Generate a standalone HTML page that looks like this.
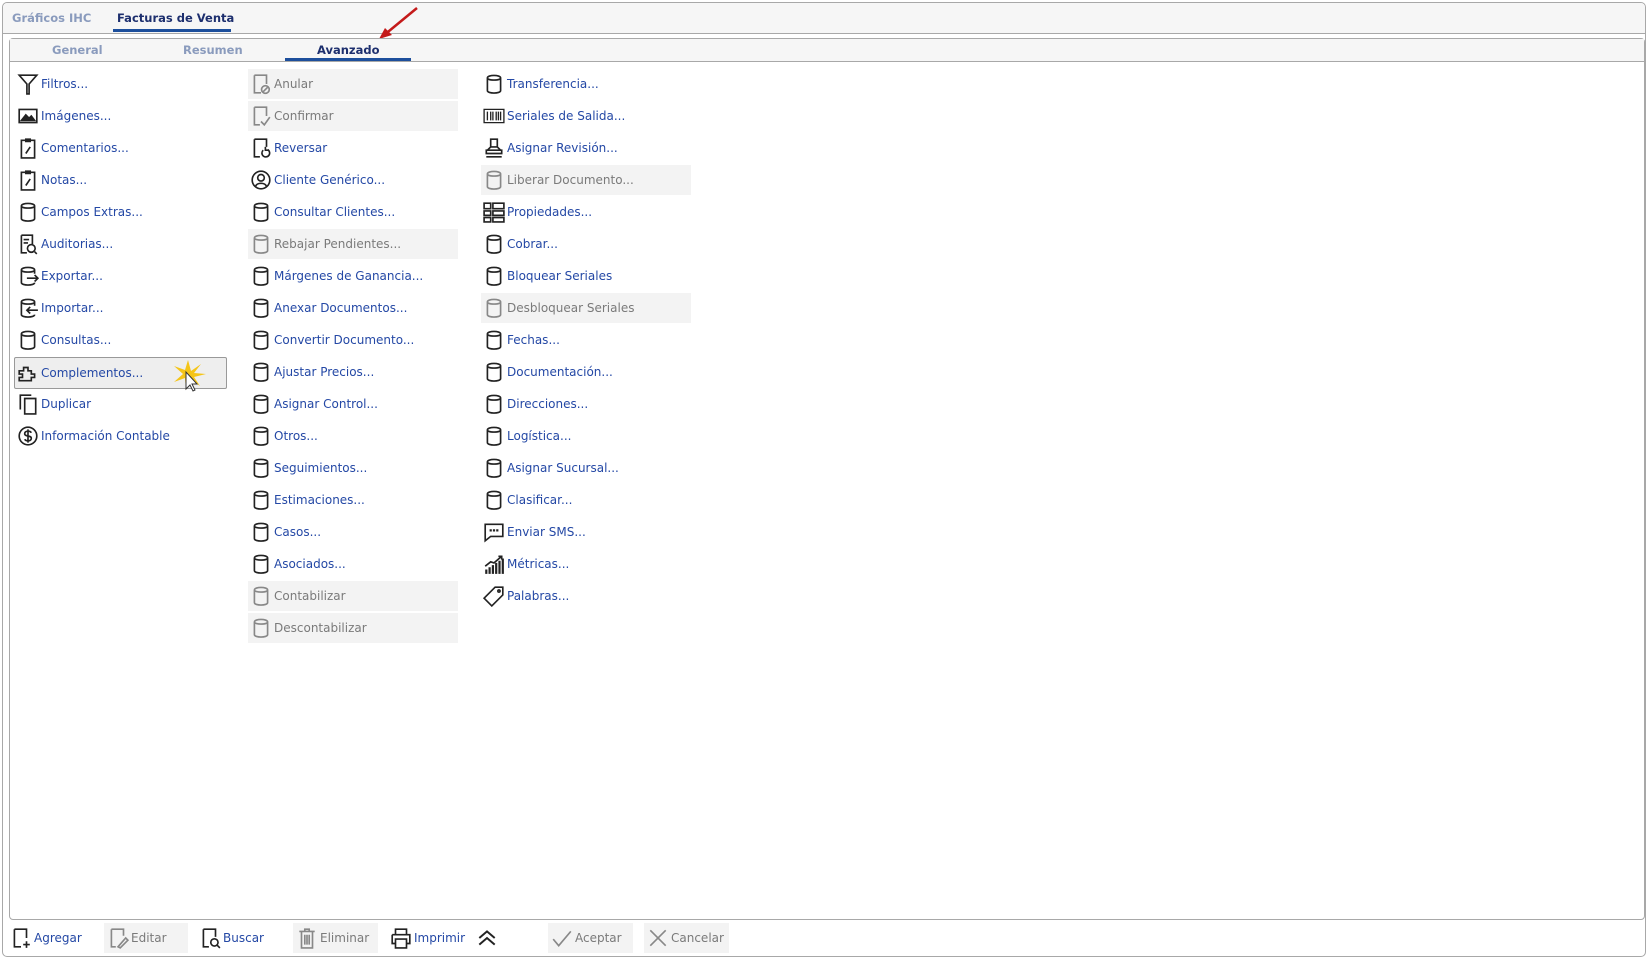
<!DOCTYPE html>
<html><head><meta charset="utf-8"><style>
body{margin:0;width:1652px;height:961px;background:#fff;position:relative;overflow:hidden;font-family:"DejaVu Sans","Liberation Sans",sans-serif;font-size:12px;}
.outer{position:absolute;left:2px;top:2px;width:1644px;height:955px;border:1px solid #a8a8a8;border-radius:5px;box-sizing:border-box;}
.tabbar{position:absolute;left:3px;top:3px;width:1642px;height:30px;background:#f6f6f6;border-bottom:1px solid #a8a8a8;border-radius:5px 5px 0 0;}
.inner{position:absolute;left:9px;top:38px;width:1636px;height:882px;border:1px solid #a8a8a8;border-radius:4px;box-sizing:border-box;}
.subbar{position:absolute;left:10px;top:39px;width:1634px;height:22px;background:#f6f6f6;border-bottom:1px solid #a8a8a8;}
.t{position:absolute;font-weight:bold;font-size:11.5px;color:#8a9bbd;white-space:nowrap;}
.t.a{color:#1d2f6e}
.ul{position:absolute;height:3px;background:#1d4f9c}
.it{position:absolute;height:30px;line-height:30px;white-space:nowrap;color:#2448a5;}
.it svg{position:absolute;left:2px;top:4px;width:22px;height:22px;fill:none;stroke:#222;stroke-width:1.5}
.it span{position:absolute;left:26px;}
.it.d{background:#f3f3f3;color:#7a7a7a}
.it.d svg{stroke:#888}
.c1{left:15px;width:210px}.c2{left:248px;width:210px}.c3{left:481px;width:210px}
.tb{position:absolute;top:923px;height:30px;line-height:30px;color:#2448a5;white-space:nowrap}
.tb svg{position:absolute;left:3px;top:4px;width:22px;height:22px;fill:none;stroke:#222;stroke-width:1.5}
.tb span{position:absolute;left:27px}
.tb.d{background:#f3f3f3;color:#7a7a7a}.tb.d svg{stroke:#888}
</style></head><body>
<svg width="0" height="0" style="position:absolute"><defs>
<symbol id="cyl" viewBox="0 0 20 20"><path d="M4 4.5C4 1.5 16 1.5 16 4.5V16C16 19 4 19 4 16Z M4 4.5C4 7 16 7 16 4.5"/></symbol>
<symbol id="clip" viewBox="0 0 20 20"><path d="M4 3H16V19H4Z M8 2H12V4H8Z M8 15L12 9"/></symbol>
</defs></svg>
<div class="outer"></div><div class="tabbar"></div>
<div class="t" style="left:12px;top:11px">Gráficos IHC</div>
<div class="t a" style="left:117px;top:11px">Facturas de Venta</div>
<div class="ul" style="left:113px;top:29px;width:118px"></div>
<svg style="position:absolute;left:375px;top:6px" width="48" height="36"><path d="M42 2L8 30" stroke="#c41a1a" stroke-width="2.5"/><path d="M4 33L10 22L17 29Z" fill="#c41a1a"/></svg>
<div class="inner"></div><div class="subbar"></div>
<div class="t" style="left:52px;top:43px">General</div>
<div class="t" style="left:183px;top:43px">Resumen</div>
<div class="t a" style="left:317px;top:43px">Avanzado</div>
<div class="ul" style="left:285px;top:58px;width:126px"></div>

<div class="it c1" style="top:69px"><svg viewBox="0 0 20 20"><path d="M2 2H18L11 10V19H9V10Z"/></svg><span>Filtros...</span></div>
<div class="it c1" style="top:101px"><svg viewBox="0 0 20 20"><path d="M2 4H18V16H2Z"/><path d="M4 14L8 9L11 12L13 10L16 14Z" fill="#222"/></svg><span>Imágenes...</span></div>
<div class="it c1" style="top:133px"><svg><use href="#clip"/></svg><span>Comentarios...</span></div>
<div class="it c1" style="top:165px"><svg><use href="#clip"/></svg><span>Notas...</span></div>
<div class="it c1" style="top:197px"><svg><use href="#cyl"/></svg><span>Campos Extras...</span></div>
<div class="it c1" style="top:229px"><svg viewBox="0 0 20 20"><path d="M4 2H14V10 M4 2V18H9 M6 6H11 M6 9H10"/><circle cx="13" cy="14" r="3.5"/><path d="M16 17L18 19"/></svg><span>Auditorias...</span></div>
<div class="it c1" style="top:261px"><svg viewBox="0 0 20 20"><path d="M16 8V4.5C16 1.5 4 1.5 4 4.5V16C4 19 16 19 16 16 M4 4.5C4 7 16 7 16 4.5 M9 12H19 M16 9L19 12L16 15"/></svg><span>Exportar...</span></div>
<div class="it c1" style="top:293px"><svg viewBox="0 0 20 20"><path d="M16 8V4.5C16 1.5 4 1.5 4 4.5V16C4 19 16 19 16 16 M4 4.5C4 7 16 7 16 4.5 M9 12H19 M12 9L9 12L12 15"/></svg><span>Importar...</span></div>
<div class="it c1" style="top:325px"><svg><use href="#cyl"/></svg><span>Consultas...</span></div>
<div class="it c1" style="top:357px;height:30px;background:#eee;border:1px solid #999;border-radius:2px;left:14px;width:211px"><svg viewBox="0 0 20 20"><path d="M2 8H6V5H10V8H13V11H16V14H13V17H2V14H5V11H2Z"/></svg><span>Complementos...</span>
<svg viewBox="0 0 40 40" style="left:155px;top:0;width:40px;height:40px;stroke:none"><path d="M18 2L21 13L31 6L24 15L36 16L24 19L30 28L20 21L16 32L15 20L4 24L13 16L4 8L15 12Z" fill="#f5c518"/><path d="M16 14V31L20 27L23 33L25 32L22 26H27Z" fill="#fff" stroke="#333" stroke-width="1"/></svg></div>
<div class="it c1" style="top:389px"><svg viewBox="0 0 20 20"><path d="M7 5H17V19H7Z M3 15V2H13"/></svg><span>Duplicar</span></div>
<div class="it c1" style="top:421px"><svg viewBox="0 0 20 20"><circle cx="10" cy="10" r="8"/><path d="M13 7C12 5 7 5 7 8C7 11 13 9 13 12C13 15 8 15 7 13 M10 4V16"/></svg><span>Información Contable</span></div>

<div class="it c2 d" style="top:69px"><svg viewBox="0 0 20 20"><path d="M4 2H15V10 M4 2V18H10"/><circle cx="14" cy="15" r="3.5"/><path d="M12 17L16 13"/></svg><span>Anular</span></div>
<div class="it c2 d" style="top:101px"><svg viewBox="0 0 20 20"><path d="M4 2H15V10 M4 2V18H9 M10 15L13 18L18 11"/></svg><span>Confirmar</span></div>
<div class="it c2" style="top:133px"><svg viewBox="0 0 20 20"><path d="M4 2H15V9 M4 2V18H9 M12 12A3.5 3.5 0 1 0 16 11.5 M14 9V12H17"/></svg><span>Reversar</span></div>
<div class="it c2" style="top:165px"><svg viewBox="0 0 20 20"><circle cx="10" cy="10" r="8"/><circle cx="10" cy="8" r="3"/><path d="M5 16C6 12 14 12 15 16"/></svg><span>Cliente Genérico...</span></div>
<div class="it c2" style="top:197px"><svg><use href="#cyl"/></svg><span>Consultar Clientes...</span></div>
<div class="it c2 d" style="top:229px"><svg><use href="#cyl"/></svg><span>Rebajar Pendientes...</span></div>
<div class="it c2" style="top:261px"><svg><use href="#cyl"/></svg><span>Márgenes de Ganancia...</span></div>
<div class="it c2" style="top:293px"><svg><use href="#cyl"/></svg><span>Anexar Documentos...</span></div>
<div class="it c2" style="top:325px"><svg><use href="#cyl"/></svg><span>Convertir Documento...</span></div>
<div class="it c2" style="top:357px"><svg><use href="#cyl"/></svg><span>Ajustar Precios...</span></div>
<div class="it c2" style="top:389px"><svg><use href="#cyl"/></svg><span>Asignar Control...</span></div>
<div class="it c2" style="top:421px"><svg><use href="#cyl"/></svg><span>Otros...</span></div>
<div class="it c2" style="top:453px"><svg><use href="#cyl"/></svg><span>Seguimientos...</span></div>
<div class="it c2" style="top:485px"><svg><use href="#cyl"/></svg><span>Estimaciones...</span></div>
<div class="it c2" style="top:517px"><svg><use href="#cyl"/></svg><span>Casos...</span></div>
<div class="it c2" style="top:549px"><svg><use href="#cyl"/></svg><span>Asociados...</span></div>
<div class="it c2 d" style="top:581px"><svg><use href="#cyl"/></svg><span>Contabilizar</span></div>
<div class="it c2 d" style="top:613px"><svg><use href="#cyl"/></svg><span>Descontabilizar</span></div>

<div class="it c3" style="top:69px"><svg><use href="#cyl"/></svg><span>Transferencia...</span></div>
<div class="it c3" style="top:101px"><svg viewBox="0 0 20 20"><path d="M1 4H19V16H1Z M4 6V14 M7 6V14 M9 6V14 M12 6V14 M14 6V14 M16 6V14" stroke-width="1.2"/></svg><span>Seriales de Salida...</span></div>
<div class="it c3" style="top:133px"><svg viewBox="0 0 20 20"><path d="M7 2H13V9H7Z M7 9L4 12H16L13 9 M3 12H17V15H3Z M3 18H17"/></svg><span>Asignar Revisión...</span></div>
<div class="it c3 d" style="top:165px"><svg><use href="#cyl"/></svg><span>Liberar Documento...</span></div>
<div class="it c3" style="top:197px"><svg viewBox="0 0 20 20"><path d="M1 2H7V7H1Z M9 2H19V7H9Z M1 9H7V13H1Z M9 9H19V13H9Z M1 15H7V19H1Z M9 15H19V19H9Z"/></svg><span>Propiedades...</span></div>
<div class="it c3" style="top:229px"><svg><use href="#cyl"/></svg><span>Cobrar...</span></div>
<div class="it c3" style="top:261px"><svg><use href="#cyl"/></svg><span>Bloquear Seriales</span></div>
<div class="it c3 d" style="top:293px"><svg><use href="#cyl"/></svg><span>Desbloquear Seriales</span></div>
<div class="it c3" style="top:325px"><svg><use href="#cyl"/></svg><span>Fechas...</span></div>
<div class="it c3" style="top:357px"><svg><use href="#cyl"/></svg><span>Documentación...</span></div>
<div class="it c3" style="top:389px"><svg><use href="#cyl"/></svg><span>Direcciones...</span></div>
<div class="it c3" style="top:421px"><svg><use href="#cyl"/></svg><span>Logística...</span></div>
<div class="it c3" style="top:453px"><svg><use href="#cyl"/></svg><span>Asignar Sucursal...</span></div>
<div class="it c3" style="top:485px"><svg><use href="#cyl"/></svg><span>Clasificar...</span></div>
<div class="it c3" style="top:517px"><svg viewBox="0 0 20 20"><path d="M2 3H18V14H7L2 18Z"/><path d="M6 8.5H8 M9 8.5H11 M12 8.5H14" stroke-width="2"/></svg><span>Enviar SMS...</span></div>
<div class="it c3" style="top:549px"><svg viewBox="0 0 20 20"><path d="M3 19V15 M6 19V13 M9 19V11 M12 19V9 M15 19V7 M18 19V5" stroke-width="2"/><path d="M2 12L7 8L10 9L17 3 M14 3H17V6"/></svg><span>Métricas...</span></div>
<div class="it c3" style="top:581px"><svg viewBox="0 0 20 20"><path d="M11 2H18V9L8 19L1 12Z"/><circle cx="14.5" cy="5.5" r="1"/></svg><span>Palabras...</span></div>

<div class="tb" style="left:7px;width:80px"><svg viewBox="0 0 20 20"><path d="M4 2H15V10 M4 2V18H10 M15 13V19 M12 16H18"/></svg><span>Agregar</span></div>
<div class="tb d" style="left:104px;width:84px"><svg viewBox="0 0 20 20"><path d="M4 2H15V8 M4 2V18H8 M10 18L17 10L19 12L12 19Z"/></svg><span>Editar</span></div>
<div class="tb" style="left:196px;width:80px"><svg viewBox="0 0 20 20"><path d="M4 2H15V9 M4 2V18H9"/><circle cx="14" cy="14" r="3.3"/><path d="M16.5 16.5L19 19"/></svg><span>Buscar</span></div>
<div class="tb d" style="left:293px;width:85px"><svg viewBox="0 0 20 20"><path d="M3 4H17 M8 4V2H12V4 M5 4V19H15V4 M8 7V16 M10 7V16 M12 7V16"/></svg><span>Eliminar</span></div>
<div class="tb" style="left:387px;width:90px"><svg viewBox="0 0 20 20"><path d="M5 7V2H15V7 M2 7H18V15H15 M5 15H2V7 M5 11H15V19H5Z"/></svg><span>Imprimir</span></div>
<svg style="position:absolute;left:476px;top:927px" width="22" height="22" viewBox="0 0 20 20" fill="none" stroke="#222" stroke-width="1.8"><path d="M3 10L10 4L17 10 M3 16L10 10L17 16"/></svg>
<div class="tb d" style="left:548px;width:85px"><svg viewBox="0 0 20 20"><path d="M2 11L7 17L18 4"/></svg><span>Aceptar</span></div>
<div class="tb d" style="left:644px;width:85px"><svg viewBox="0 0 20 20"><path d="M3 3L17 17 M17 3L3 17"/></svg><span>Cancelar</span></div>
</body></html>
